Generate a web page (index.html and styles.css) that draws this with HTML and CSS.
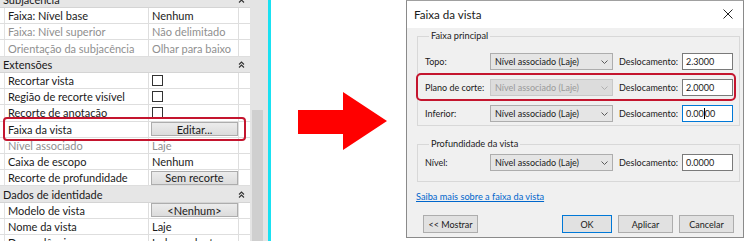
FILE: index.html
```html
<!DOCTYPE html>
<html lang="pt">
<head>
<meta charset="utf-8">
<link rel="stylesheet" href="styles.css">
</head>
<body>
<div class="page">
  <div class="props">
    <div class="grp"><span>Subjacência</span><svg class="dchev" width="7" height="7" viewBox="0 0 7 7"><polyline points="1,3.5 3.5,1 6,3.5" /><polyline points="1,6.5 3.5,4 6,6.5" /></svg></div>
    <div class="row"><div class="k">Faixa: Nível base</div><div class="v">Nenhum</div><div class="x"></div></div>
    <div class="row dis"><div class="k">Faixa: Nível superior</div><div class="v">Não delimitado</div><div class="x"></div></div>
    <div class="row dis"><div class="k">Orientação da subjacência</div><div class="v">Olhar para baixo</div><div class="x"></div></div>
    <div class="grp"><span>Extensões</span><svg class="dchev" width="7" height="7" viewBox="0 0 7 7"><polyline points="1,3.5 3.5,1 6,3.5" /><polyline points="1,6.5 3.5,4 6,6.5" /></svg></div>
    <div class="row"><div class="k">Recortar vista</div><div class="v"><span class="cb"></span></div><div class="x"></div></div>
    <div class="row"><div class="k">Região de recorte visível</div><div class="v"><span class="cb"></span></div><div class="x"></div></div>
    <div class="row"><div class="k">Recorte de anotação</div><div class="v"><span class="cb"></span></div><div class="x"></div></div>
    <div class="row"><div class="k">Faixa da vista</div><div class="v"><span class="pbtn">Editar...</span></div><div class="x"></div></div>
    <div class="row dis"><div class="k">Nível associado</div><div class="v">Laje</div><div class="x"></div></div>
    <div class="row"><div class="k">Caixa de escopo</div><div class="v">Nenhum</div><div class="x"></div></div>
    <div class="row"><div class="k">Recorte de profundidade</div><div class="v"><span class="pbtn">Sem recorte</span></div><div class="x"></div></div>
    <div class="grp"><span>Dados de identidade</span><svg class="dchev" width="7" height="7" viewBox="0 0 7 7"><polyline points="1,3.5 3.5,1 6,3.5" /><polyline points="1,6.5 3.5,4 6,6.5" /></svg></div>
    <div class="row"><div class="k">Modelo de vista</div><div class="v"><span class="pbtn">&lt;Nenhum&gt;</span></div><div class="x"></div></div>
    <div class="row"><div class="k">Nome da vista</div><div class="v">Laje</div><div class="x"></div></div>
    <div class="row"><div class="k">Dependência</div><div class="v">Independente</div><div class="x"></div></div>
    <div class="hl hl-left"></div>
  </div>
  <div class="scroll"><div class="thumb"></div></div>
  <div class="cyan"></div>
  <div class="mid">
    <svg class="arrow" width="89" height="58" viewBox="0 0 89 58"><polygon points="0,18 45,18 45,0 89,29 45,58 45,42 0,42" /></svg>
  </div>
  <div class="dialog">
    <div class="title"><span>Faixa da vista</span>
      <svg class="close" width="10" height="10" viewBox="0 0 10 10"><line x1="0.5" y1="0.5" x2="9.5" y2="9.5"/><line x1="9.5" y1="0.5" x2="0.5" y2="9.5"/></svg>
    </div>
    <div class="body">
      <fieldset class="box box1">
        <legend>Faixa principal</legend>
        <div class="frow">
          <span class="lbl">Topo:</span>
          <div class="sel"><span>Nível associado (Laje)</span><svg width="7" height="4" viewBox="0 0 7 4"><polyline points="0.5,0.5 3.5,3.5 6.5,0.5"/></svg></div>
          <span class="lbl dl">Deslocamento:</span>
          <div class="inp">2.3000</div>
        </div>
        <div class="frow">
          <span class="lbl">Plano de corte:</span>
          <div class="sel disabled"><span>Nível associado (Laje)</span><svg width="7" height="4" viewBox="0 0 7 4"><polyline points="0.5,0.5 3.5,3.5 6.5,0.5"/></svg></div>
          <span class="lbl dl">Deslocamento:</span>
          <div class="inp">2.0000</div>
        </div>
        <div class="frow">
          <span class="lbl">Inferior:</span>
          <div class="sel"><span>Nível associado (Laje)</span><svg width="7" height="4" viewBox="0 0 7 4"><polyline points="0.5,0.5 3.5,3.5 6.5,0.5"/></svg></div>
          <span class="lbl dl">Deslocamento:</span>
          <div class="inp focus">0.00<span class="caret"></span>00</div>
        </div>
      </fieldset>
      <fieldset class="box box2">
        <legend>Profundidade da vista</legend>
        <div class="frow">
          <span class="lbl">Nível:</span>
          <div class="sel"><span>Nível associado (Laje)</span><svg width="7" height="4" viewBox="0 0 7 4"><polyline points="0.5,0.5 3.5,3.5 6.5,0.5"/></svg></div>
          <span class="lbl dl">Deslocamento:</span>
          <div class="inp">0.0000</div>
        </div>
      </fieldset>
      <a class="link">Saiba mais sobre a faixa da vista</a>
      <div class="btns">
        <span class="btn">&lt;&lt; Mostrar</span>
        <span class="spacer"></span>
        <span class="btn ok">OK</span>
        <span class="btn">Aplicar</span>
        <span class="btn">Cancelar</span>
      </div>
      <div class="hl hl-dlg"></div>
    </div>
  </div>
</div>
</body>
</html>
```

FILE: styles.css
```css
* { box-sizing: border-box; }
html, body { margin: 0; padding: 0; background: #fff; }
body { width: 750px; height: 241px; overflow: hidden; font-family: Lato, "Noto Sans", sans-serif; color: #1a1a1a; }
.page { display: flex; width: 750px; height: 241px; }

/* properties palette */
.props { position: relative; width: 250px; flex: none; margin-top: -8.2px; font-size: 11px; }
.grp { height: 16.23px; background: #e6e6e6; border-bottom: 1px solid #d4d4d4; display: flex; align-items: center; justify-content: space-between; padding: 0 5px 0 3px; line-height: 1; }
.dchev { fill: none; stroke: #333; stroke-width: 1.1; }
.row { height: 16.23px; display: grid; grid-template-columns: 145px 90px 11px; padding-left: 4px; border-bottom: 1px solid #dedede; line-height: 1; }
.row > div { display: flex; align-items: center; overflow: hidden; white-space: nowrap; }
.k { border-left: 1px solid #e2e2e2; border-right: 1px solid #dedede; padding-left: 3px; }
.v { border-right: 1px solid #dedede; padding-left: 3px; }
.row.dis .k, .row.dis .v { color: #8f8f8f; }
.cb { width: 11px; height: 11px; border: 1px solid #333; background: #fff; display: block; }
.pbtn { display: flex; align-items: center; justify-content: center; width: 88px; margin-left: -1px; height: 14px; background: linear-gradient(#ececec, #dcdcdc); border: 1px solid #adadad; }
.hl { position: absolute; border: 2px solid #c4152e; border-radius: 4px; }
.hl-left { left: 3px; top: 125.2px; width: 243px; height: 24px; }

.scroll { width: 18px; flex: none; background: #e4e4e4; position: relative; }
.thumb { position: absolute; left: 2px; width: 11px; top: 110px; bottom: 0; background: #cfcfcf; }
.cyan { width: 3px; flex: none; background: #19e1f2; }
.mid { width: 135px; flex: none; display: flex; align-items: center; padding-left: 27px; }
.arrow { fill: #ff0000; }

/* dialog */
.dialog { width: 338px; flex: none; height: 238px; border: 1px solid #8a8a8a; border-top-color: #a0a0a0; display: flex; flex-direction: column; font-size: 9px; color: #1a1a1a; }
.title { height: 27px; flex: none; background: #fff; display: flex; align-items: center; justify-content: space-between; padding: 0 10px 1px 7px; font-size: 11.6px; }
.close { stroke: #222; stroke-width: 1; }
.body { flex: 1; background: #f0f0f0; position: relative; padding: 2px 3px 0 10px; }
.box { margin: 0; border: 1px solid #d8d8d8; padding: 0 0 0 7px; min-width: 0; }
.box legend { padding: 0 2px; margin-left: 4px; line-height: 12px; font-size: 9.2px; }
.box1 { padding-top: 11px; padding-bottom: 3px; }
.box2 { margin-top: 12px; padding-top: 4px; padding-bottom: 10px; }
.frow { display: grid; grid-template-columns: 65px 123px 69px 51px; height: 17px; align-items: center; margin-bottom: 9px; }
.box .frow:last-child { margin-bottom: 0; }
.lbl { white-space: nowrap; }
.lbl.dl { padding-left: 6px; }
.sel { height: 17px; border: 1px solid #adadad; background: #e5e5e5; display: flex; align-items: center; justify-content: space-between; padding: 0 4px 0 4px; white-space: nowrap; }
.sel svg { fill: none; stroke: #5a5a5a; stroke-width: 1; }
.sel.disabled { background: #dcdcdc; border-color: #c8c8c8; color: #9a9a9a; }
.sel.disabled svg { stroke: #b0b0b0; }
.inp { height: 17px; border: 1px solid #7a7a7a; background: #fff; display: flex; align-items: center; padding-left: 3px; }
.inp.focus { border-color: #0078d7; }
.caret { display: inline-block; width: 1px; height: 11px; background: #000; }
.link { display: block; margin: 9px 0 0 -1px; color: #0066cc; text-decoration: underline; font-size: 9.2px; line-height: 12px; }
.btns { display: flex; margin: 12px 0 0 6px; padding-right: 6px; gap: 6px; }
.btn { height: 18px; width: 55px; border: 1px solid #adadad; background: #e1e1e1; display: flex; align-items: center; justify-content: center; }
.btns .spacer { flex: 1; }
.btn.ok { width: 50px; border-color: #0078d7; }
.hl-dlg { left: 9px; top: 45px; width: 320px; height: 28px; border-radius: 5px; }
```
